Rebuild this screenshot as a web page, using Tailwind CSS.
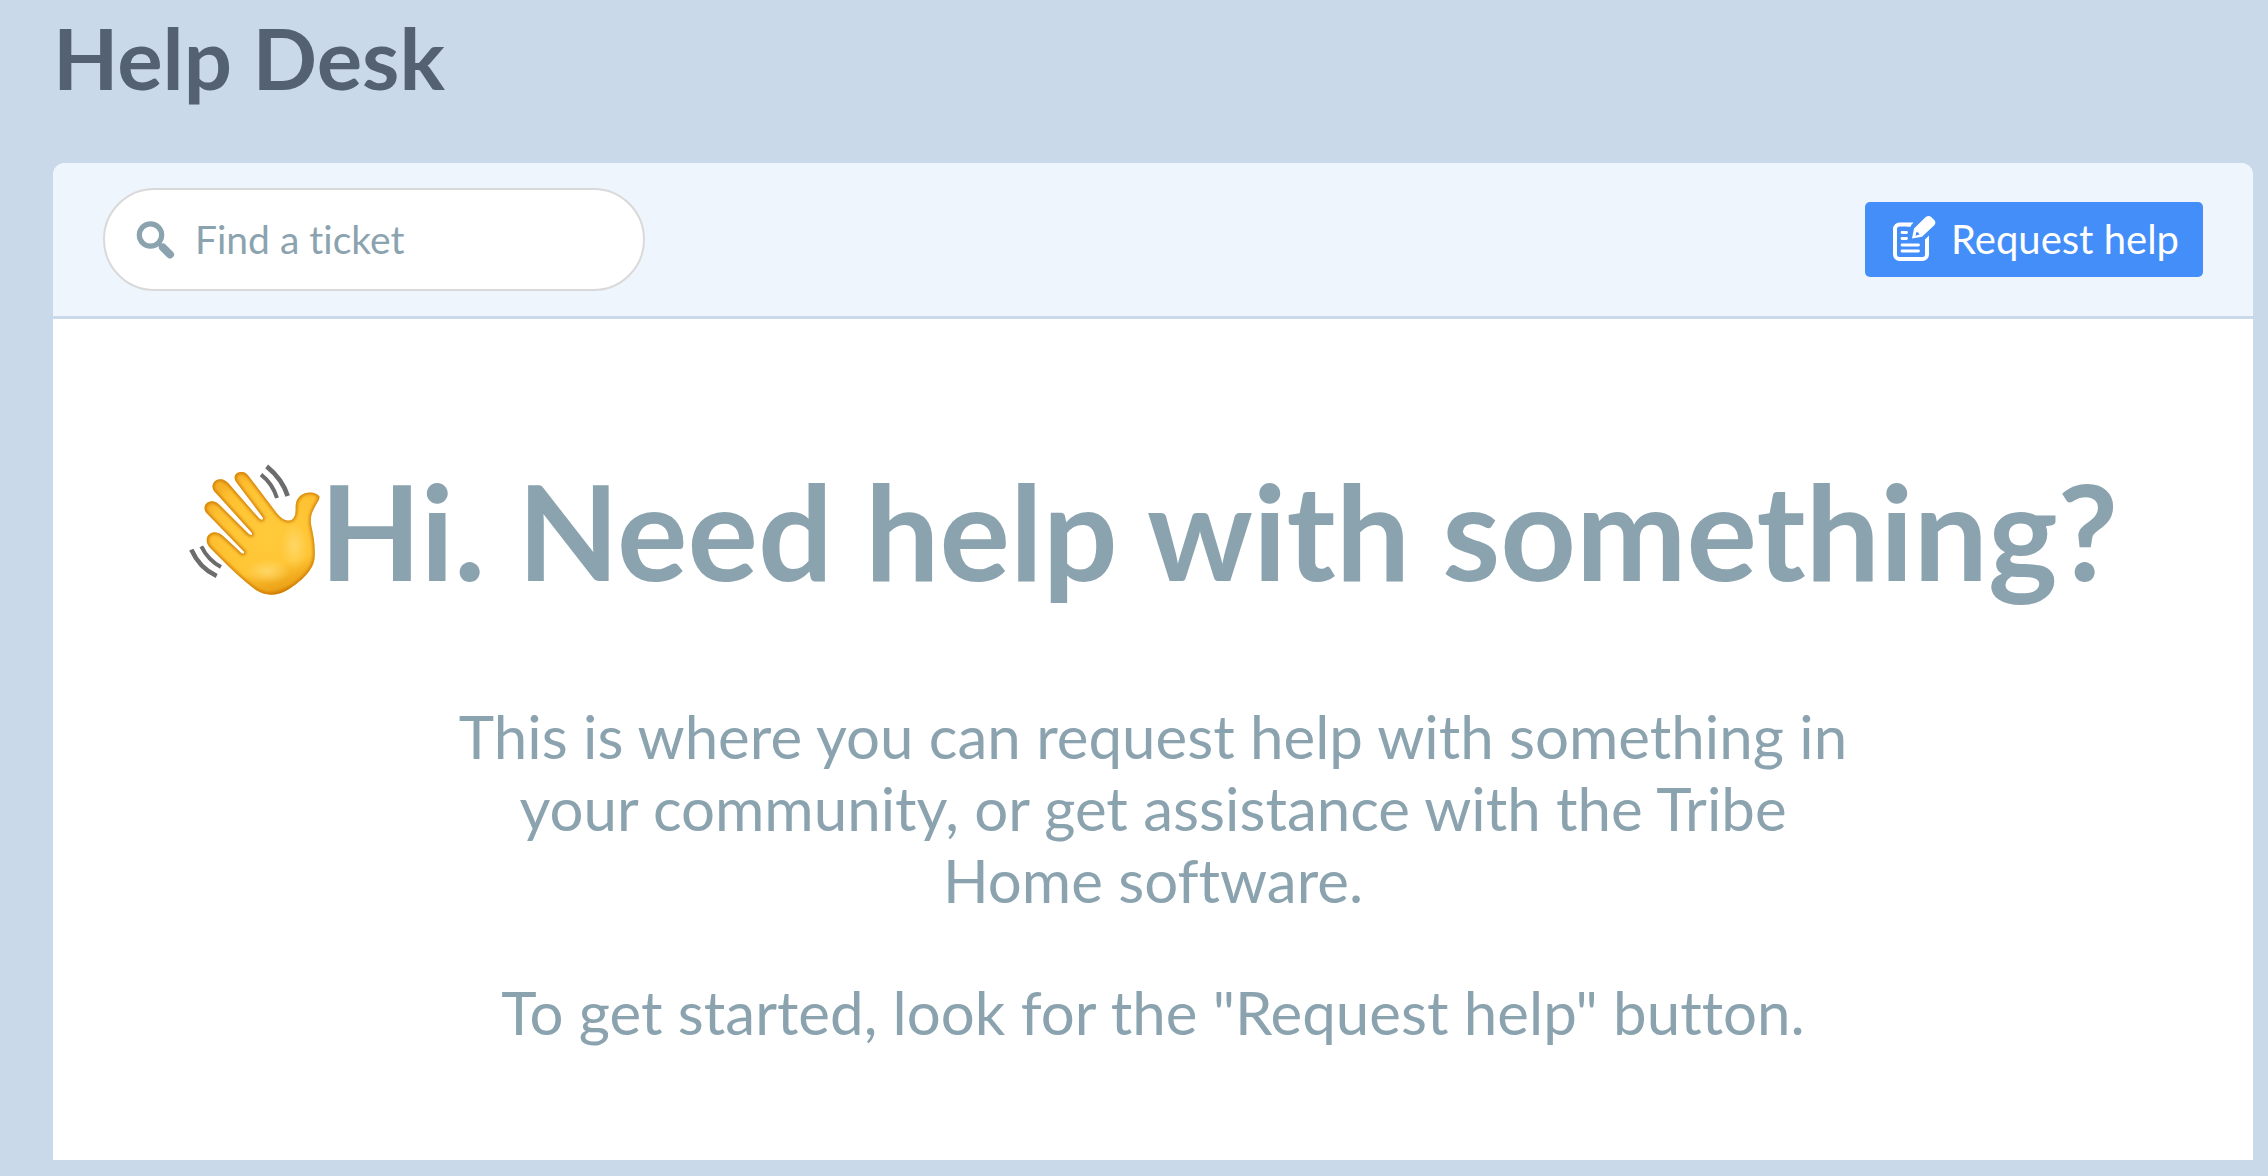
<!DOCTYPE html>
<html lang="en">
<head>
<meta charset="utf-8">
<meta name="viewport" content="width=device-width, initial-scale=1">
<title>Help Desk</title>
<script src="https://cdn.jsdelivr.net/npm/@tailwindcss/browser@4"></script>
</head>
<body class="min-h-screen bg-[#c9d9e9] pt-[5px] pr-[15px] pb-4 pl-[53px] font-['Lato',sans-serif] [font-variant-ligatures:none]">
<h1 class="text-[85px] leading-[104px] font-bold text-[#536172]">Help Desk</h1>

<main class="mt-[54px] overflow-hidden rounded-t-xl bg-white">
  <header class="flex items-center justify-between border-b-3 border-[#c9d9e9] bg-[#eef5fc] px-[50px] py-[25px]">
    <label class="flex h-[103px] w-[542px] items-center gap-5 rounded-full border-2 border-[#d9d9d9] bg-white px-[30px]">
      <svg class="h-10 w-10 shrink-0" viewBox="0 0 40 40" fill="none" aria-hidden="true">
        <circle cx="15.500" cy="15" r="11.200" stroke="#8ba3af" stroke-width="5.200"/>
        <path d="M22.500 22.500 27 27" stroke="#8ba3af" stroke-width="4"/>
        <path d="M28 27.500 35 34.500" stroke="#8ba3af" stroke-width="8" stroke-linecap="round"/>
      </svg>
      <input type="search" aria-label="Find a ticket" placeholder="Find a ticket" class="min-w-0 flex-1 bg-transparent pb-[2px] text-[39px] leading-[48px] text-[#8ba3af] outline-none placeholder:text-[#8ba3af]">
    </label>
    <button type="button" class="flex h-[75px] items-center gap-[14px] rounded-[5px] bg-[#448ef9] pr-6 pl-[26px] text-[40px] leading-[48px] text-white">
      <svg class="h-[50px] w-[46px] shrink-0" viewBox="0 0 46 50" fill="none" aria-hidden="true">
        <path d="M20 9.500H8.500a4.500 4.500 0 0 0-4.500 4.500V39.500a4.500 4.500 0 0 0 4.500 4.500H31.500a4.500 4.500 0 0 0 4.500-4.500V24" stroke="#fff" stroke-width="4"/>
        <path d="M20 7.500 16 11.500H19L22.500 7.500ZM38 20.500 34 24.500V28L38 25Z" fill="#fff"/>
        <path d="M11 17.500h4.500M11 23.500h4.500M11 30h16.500M11 36h16.500" stroke="#fff" stroke-width="2.800" stroke-linecap="round"/>
        <path fill-rule="evenodd" d="M21 23.500 23 13.500 35 1.800Q38 0 40.500 2.200L43.500 5.200Q45.500 8 43 10.500L31 21.700ZM24.500 20.800 28.500 19.500Q28 17.500 25.500 16.800Z" fill="#fff"/>
      </svg>
      <span class="pb-[2px]">Request help</span>
    </button>
  </header>

  <section class="flex flex-col items-center px-6 pt-[131px] pb-[112px] text-center text-[#8ba3af]">
    <h2 class="flex items-center text-[132px] leading-[160px] font-bold">
      <svg class="h-[132px] w-[132px] shrink-0" viewBox="0 0 396 396" role="img" aria-label="Waving hand">
        <defs>
          <radialGradient id="skin" gradientUnits="userSpaceOnUse" cx="245" cy="215" r="205">
            <stop offset="0" stop-color="#ffca3b"/>
            <stop offset=".6" stop-color="#ffc534"/>
            <stop offset=".85" stop-color="#fdbf30"/>
            <stop offset="1" stop-color="#f5b024"/>
          </radialGradient>
          <linearGradient id="shade" gradientUnits="userSpaceOnUse" x1="250" y1="220" x2="305" y2="400">
            <stop offset=".45" stop-color="#d98200" stop-opacity="0"/>
            <stop offset=".8" stop-color="#dc8700" stop-opacity=".5"/>
            <stop offset="1" stop-color="#b96500"/>
          </linearGradient>
          <radialGradient id="glow">
            <stop offset="0" stop-color="#ffdb72" stop-opacity=".8"/>
            <stop offset="1" stop-color="#ffdb72" stop-opacity="0"/>
          </radialGradient>
          <filter id="soft" x="-20%" y="-20%" width="140%" height="140%"><feGaussianBlur stdDeviation="4"/></filter>
          <path id="hand" d="M204 378C164 349 110 296 66 251C48 232 56 206 80 205C95 205 105 216 116 226L160 267Q169 272 169 264L56 148C42 133 52 113 71 112C83 111 91 119 99 127L183 211Q194 217 192 207L80 83C64 66 80 42 101 46C112 48 117 54 124 61L213 163Q226 173 225 161L146 56C132 37 144 22 164 24C175 26 180 34 188 44L266 147C288 175 315 179 322 149C325 127 318 111 339 94C353 82 384 82 394 97C398 104 385 119 377 136C368 154 366 169 371 191C377 216 382 246 380 279C378 319 339 350 309 371C273 396 237 399 204 378Z"/>
          <clipPath id="handClip"><use href="#hand"/></clipPath>
        </defs>
        <use href="#hand" fill="url(#skin)"/>
        <use href="#hand" fill="url(#shade)"/>
        <g clip-path="url(#handClip)">
          <use href="#hand" fill="none" stroke="#c97300" stroke-opacity=".85" stroke-width="10" filter="url(#soft)"/>
          <ellipse cx="320" cy="245" rx="42" ry="72" fill="url(#glow)"/>
          <ellipse cx="240" cy="322" rx="66" ry="36" fill="url(#glow)"/>
        </g>
        <g fill="none" stroke="#6b6c6b" stroke-width="14">
          <path d="M236 7Q283 45 299 96"/>
          <path d="M219 32Q253 58 267 102" stroke-width="12"/>
          <path d="M10 257Q34 312 86 336"/>
          <path d="M40 247Q60 288 99 309" stroke-width="12"/>
        </g>
      </svg>
      <span>Hi. Need help with something?</span>
    </h2>
    <div class="mt-[90px] max-w-[1410px] space-y-[60px] text-[60px] leading-[72px]">
      <p>This is where you can request help with something in your community, or get assistance with the Tribe Home software.</p>
      <p>To get started, look for the "Request help" button.</p>
    </div>
  </section>
</main>
</body>
</html>
